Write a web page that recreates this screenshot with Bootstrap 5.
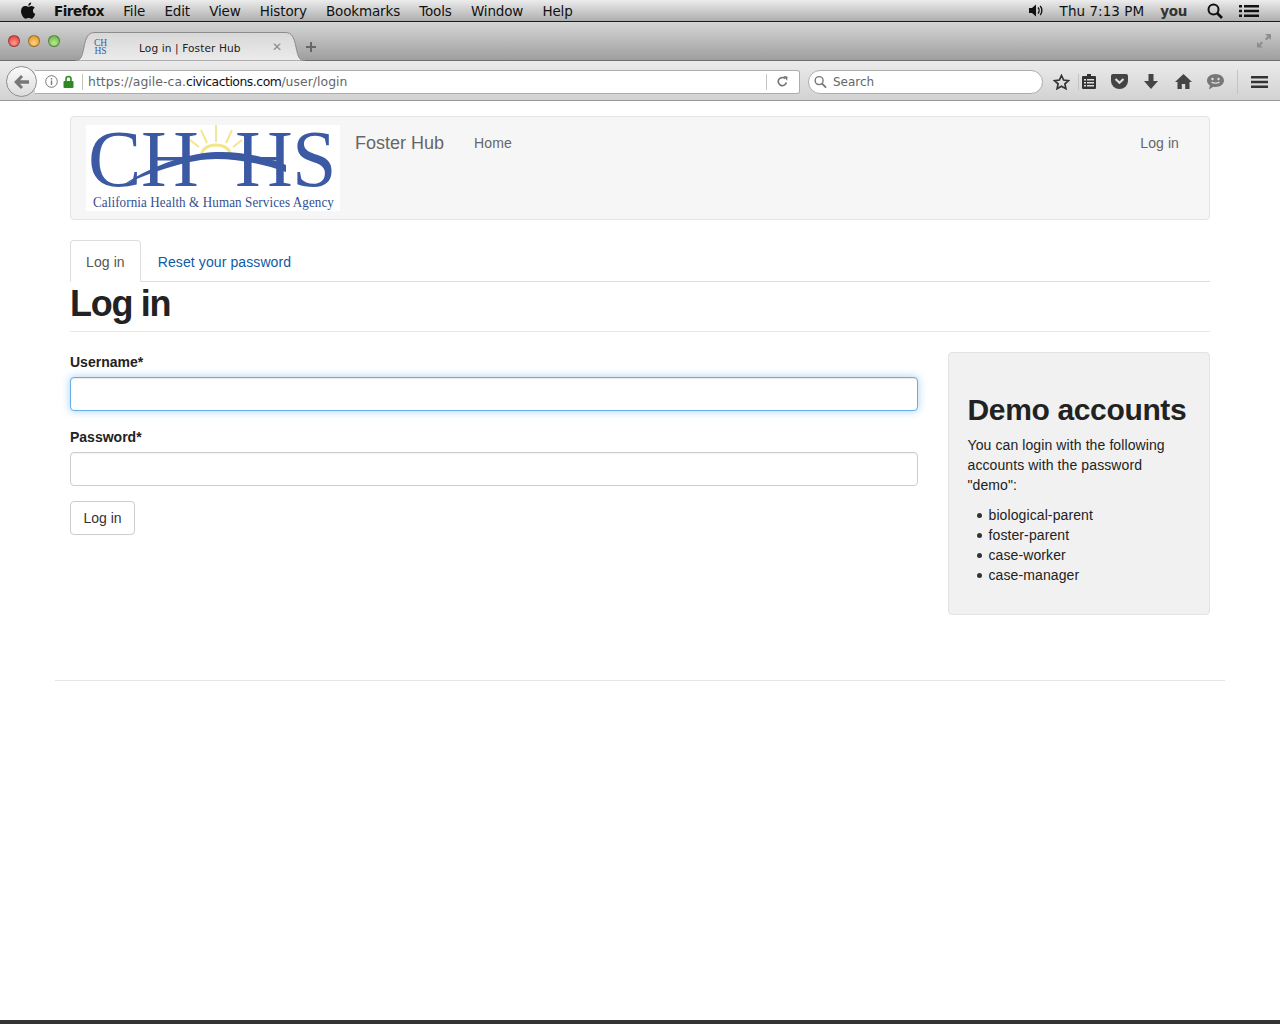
<!DOCTYPE html>
<html lang="en">
<head>
	<meta charset="UTF-8">
	<meta name="viewport" content="width=device-width, initial-scale=1.0">
	<title>Log in | Foster Hub</title>
	<link href="https://cdn.jsdelivr.net/npm/bootstrap@5.3.0/dist/css/bootstrap.min.css" rel="stylesheet">
	<style>
		html, body { height: 100%; }
		body { font-family: "Liberation Sans", Arial, sans-serif; font-size: 14px; line-height: 20px; letter-spacing: .1px; color: #222; background: #fff; overflow: hidden; }
		.screen { height: 1024px; }

		/* os + browser chrome */
		.menubar { height: 22px; font-family: "DejaVu Sans", sans-serif; font-size: 13.5px; letter-spacing: -.15px; color: #111; background: linear-gradient(#ececec, #aeaeae); border-bottom: 1px solid #1c1c1c; padding-left: 20px; padding-right: 21px; }
		.menubar span { white-space: nowrap; }
		.menu-items { margin-left: 18px; gap: 19.2px; }
		.menu-app { font-weight: 700; letter-spacing: -.5px; }
		.menu-right { margin-left: auto; }
		.menu-clock { letter-spacing: .05px; }
		.menu-user { font-weight: 700; color: #333; letter-spacing: -.3px; }
		.menu-search { margin-left: 20px; }
		.tabstrip { height: 39px; background: linear-gradient(#d6d6d6, #9e9e9e); border-bottom: 1px solid #6f6f6f; padding-left: 8px; padding-right: 8px; }
		.traffic { width: 12px; height: 12px; border-radius: 50%; margin-right: 8px; border: 1px solid rgba(0,0,0,.35); }
		.traffic-r { background: radial-gradient(circle at 50% 70%, #ff9a92, #d8322c); }
		.traffic-y { background: radial-gradient(circle at 50% 70%, #ffd47a, #d98a1c); }
		.traffic-g { background: radial-gradient(circle at 50% 70%, #b5ec8e, #5ea83a); }
		.tab-item { position: relative; width: 230px; height: 30px; margin-left: 7px; margin-top: 10px; align-self: flex-start; font-family: "DejaVu Sans", sans-serif; font-size: 10.6px; color: #222; flex-shrink: 0; }
		.tab-shape { position: absolute; left: 0; top: 0; }
		.tab-icon { position: relative; margin-left: 18px; width: 15px; font-family: "Liberation Serif", serif; font-size: 9.5px; line-height: 8px; letter-spacing: 0; color: #3b5ba5; text-align: center; }
		.tab-title { position: relative; margin-left: 31px; margin-top: 1px; }
		.tab-close { position: absolute; left: 197px; top: 5px; color: #8c8c8c; font-size: 12px; font-weight: bold; }
		.tab-plus { margin-top: 12px; }
		.toolbar { height: 40px; padding-top: 2px; background: linear-gradient(#ebebeb, #d2d2d2); border-bottom: 1px solid #9a9a9a; padding-left: 6px; font-family: "DejaVu Sans", sans-serif; font-size: 12px; letter-spacing: 0; }
		.back-btn { width: 31px; height: 31px; border-radius: 50%; background: linear-gradient(#fafafa, #dcdcdc); border: 1px solid #8f8f8f; flex: none; z-index: 1; }
		.url-bar { width: 765px; height: 24px; margin-left: -2px; background: #fff; border: 1px solid #adadad; border-left: 0; border-radius: 0 3px 3px 0; padding-left: 10px; color: #666; flex: none; }
		.url-sep { width: 1px; height: 16px; background: #c4c4c4; }
		.url-host { color: #111; letter-spacing: -.47px; }
		.url-text { margin-left: 5px; font-size: 12.4px; letter-spacing: .05px; }
		.lock-icon { margin-left: 5px; }
		.reload { margin-left: auto; margin-right: 10px; }
		.reload-icon { margin-right: 11px; }
		.search-bar { width: 235px; height: 24px; margin-left: 8px; background: #fff; border: 1px solid #adadad; border-radius: 12px; padding-left: 5px; color: #666; flex: none; }
		.search-label { margin-left: 6px; }
		.tool-icons { margin-left: 10px; }
		.tool-clip { margin-left: 3px; }
		.tool-pocket { margin-left: 15px; }
		.tool-down { margin-left: 16px; }
		.tool-home { margin-left: 17px; }
		.tool-chat { margin-left: 15px; }
		.tool-sep { margin-left: 13px; height: 24px; }
		.tool-menu { margin-left: 13px; }

		/* page */
		.page-wrap { width: 1170px; margin: 0 auto; padding: 15px 15px 0; flex: 1 1 auto; }
		.site-nav { height: 104px; padding: 8px 15px; background: #f6f6f6; border: 1px solid #e4e4e4; border-radius: 4px; color: #666; margin-bottom: 20px; }
		.logo-box { width: 254px; height: 86px; background: #fff; flex: none; }
		.site-name { margin-left: 15px; font-size: 18px; padding-top: 8px; letter-spacing: 0; }
		.site-link { margin-left: 30px; padding-top: 8px; color: #666; text-decoration: none; }
		.site-login { margin-left: auto; padding-top: 8px; padding-right: 15px; color: #666; text-decoration: none; }
		.page-tabs { border-bottom: 1px solid #ddd; height: 42px; }
		.page-tabs .nav-link { height: 42px; padding: 11px 15px; color: #0f5aa6; border: 1px solid transparent; border-radius: 4px 4px 0 0; margin-right: 1px; }
		.page-tabs .nav-link.active { color: #555; background: #fff; border-color: #ddd #ddd #fff; }
		.page-title { font-size: 36px; line-height: 40px; font-weight: 700; letter-spacing: -1.3px; color: #222; margin: 2px 0 0; padding-bottom: 7px; border-bottom: 1px solid #e8e8e8; }
		.foster-row { --bs-gutter-x: 30px; margin-top: 20px; }
		.field-label { font-weight: 700; margin-bottom: 5px; display: block; margin-top: 0; letter-spacing: 0; }
		.field-input { height: 34px; border-radius: 4px; border-color: #ccc; font-size: 14px; box-shadow: inset 0 1px 1px rgba(0,0,0,.05); }
		.field-input.is-focused { border-color: #66afe9; box-shadow: inset 0 1px 1px rgba(0,0,0,.08), 0 0 8px rgba(102,175,233,.6); }
		.field-group { margin-bottom: 16px; }
		.field-group + .field-group { margin-bottom: 15px; }
		.login-btn { height: 34px; padding: 6px 12.5px; font-size: 14px; line-height: 20px; color: #333; background: #fff; border: 1px solid #ccc; border-radius: 4px; }
		.demo-well { height: 263px; padding: 19px; background: #f1f1f1; border: 1px solid #e3e3e3; border-radius: 4px; }
		.demo-well h2 { font-size: 30px; line-height: 33px; font-weight: 700; letter-spacing: -.35px; color: #222; margin: 21px 0 9px; }
		.demo-well p { margin-bottom: 10px; }
		.demo-well ul { padding-left: 21px; margin: 0; list-style: none; }
		.demo-well li { position: relative; }
		.demo-well li::before { content: ""; position: absolute; left: -12px; top: 8px; width: 5px; height: 5px; border-radius: 50%; background: #333; }
		.page-rule { width: 1170px; margin: 65px -15px 0; border: 0; border-top: 1px solid #e5e5e5; opacity: 1; }
		.dock-edge { height: 4px; background: #333; flex: none; }
	</style>
</head>
<body>
<div class="screen d-flex flex-column">

	<!-- mac menu bar -->
	<div class="menubar d-flex align-items-center flex-shrink-0">
		<svg width="16" height="18" viewBox="0 0 16 18"><path fill="#111" d="M11.2 0.5c.1 1.5-1.2 3.200-2.900 3.200-.2-1.500 1.300-3.100 2.900-3.200zM8.200 4.700c.9 0 1.800-.8 3.300-.8 1.300 0 2.500.7 3.200 1.800-2.600 1.500-2.200 5.200.6 6.300-.5 1.300-2 4.800-3.900 4.800-1.100 0-1.500-.7-2.800-.7s-1.800.7-2.800.7C3.700 16.800 1 12.700 1 9.300c0-3.400 2.100-5.300 4.200-5.300 1.300 0 2.200.7 3 .7z"/></svg>
		<div class="d-flex menu-items">
			<span class="menu-app">Firefox</span><span>File</span><span>Edit</span><span>View</span><span>History</span><span>Bookmarks</span><span>Tools</span><span>Window</span><span>Help</span>
		</div>
		<div class="d-flex align-items-center menu-right">
			<svg width="15" height="13" viewBox="0 0 15 13"><path fill="#111" d="M0 4h3l4-3.500v12L3 9H0z"/><path fill="none" stroke="#111" stroke-width="1.400" d="M9 3.500c1.400 1.600 1.400 4.400 0 6M11.200 2c2.200 2.400 2.200 6.600 0 9"/></svg>
			<span class="menu-clock ms-3">Thu 7:13 PM</span>
			<span class="menu-user ms-3">you</span>
			<svg class="menu-search" width="16" height="16" viewBox="0 0 16 16"><circle cx="6.500" cy="6.500" r="5" fill="none" stroke="#111" stroke-width="2"/><path stroke="#111" stroke-width="2.600" d="M10 10l5 5"/></svg>
			<svg class="ms-3" width="20" height="14" viewBox="0 0 20 14"><path fill="#111" d="M0 1h3v2.500H0zM5 1h15v2.500H5zM0 5.700h3v2.500H0zM5 5.700h15v2.500H5zM0 10.500h3V13H0zM5 10.500h15V13H5z"/></svg>
		</div>
	</div>

	<!-- tab strip -->
	<div class="tabstrip d-flex align-items-center flex-shrink-0">
		<span class="traffic traffic-r"></span><span class="traffic traffic-y"></span><span class="traffic traffic-g"></span>
		<div class="tab-item d-flex align-items-center">
			<svg class="tab-shape" width="230" height="30" viewBox="0 0 230 30"><defs><linearGradient id="tabFill" x1="0" y1="0" x2="0" y2="1"><stop offset="0" stop-color="#d8d8d8"/><stop offset="1" stop-color="#ebebeb"/></linearGradient></defs><path fill="url(#tabFill)" stroke="#8c8c8c" d="M0 28.500C6 28.500 7 25 9 15 11 5 13 .5 20 .5H210C217 .5 219 5 221 15 223 25 224 28.500 230 28.500"/></svg>
			<div class="tab-icon">CH<br>HS</div>
			<span class="tab-title">Log in | Foster Hub</span>
			<span class="tab-close">✕</span>
		</div>
		<svg class="tab-plus" width="12" height="12" viewBox="0 0 12 12"><path fill="#666" d="M5 1h2v4h4v2H7v4H5V7H1V5h4z"/></svg>
		<svg class="ms-auto" width="16" height="16" viewBox="0 0 16 16"><path fill="#8d8d8d" d="M9 1h6v6l-2-2-2.500 2.500-1.500-1.500L11.500 3zM1 9l2 2 2.500-2.500L7 10l-2.500 2.500 2 2H1z"/></svg>
	</div>

	<!-- nav toolbar -->
	<div class="toolbar d-flex align-items-center flex-shrink-0">
		<div class="back-btn d-flex align-items-center justify-content-center">
			<svg width="16" height="14" viewBox="0 0 16 14"><path fill="#777" d="M7 0l2 2-3 3.300h9v3.400H6l3 3.300-2 2-7-7z"/></svg>
		</div>
		<div class="url-bar d-flex align-items-center">
			<svg width="13" height="13" viewBox="0 0 13 13"><circle cx="6.500" cy="6.500" r="5.800" fill="none" stroke="#777"/><path fill="#777" d="M5.800 5.500h1.400V10H5.800zM5.800 3h1.400v1.400H5.800z"/></svg>
			<svg class="lock-icon" width="11" height="13" viewBox="0 0 11 13"><path fill="none" stroke="#2f8a24" stroke-width="1.600" d="M3 6V4a2.500 2.500 0 0 1 5 0v2"/><rect x=".5" y="6" width="10" height="7" rx="1" fill="#2f8a24"/></svg>
			<span class="url-sep ms-2"></span>
			<span class="url-text">https://agile-ca.<span class="url-host">civicactions.com</span>/user/login</span>
			<span class="url-sep reload"></span>
			<svg class="reload-icon" width="11" height="11" viewBox="0 0 13 13"><path fill="none" stroke="#777" stroke-width="2" d="M11 7.500A4.800 4.800 0 1 1 9.500 3"/><path fill="#777" d="M7.500 0l5 .5-.5 5z"/></svg>
		</div>
		<div class="search-bar d-flex align-items-center">
			<svg width="13" height="14" viewBox="0 0 14 14"><circle cx="5.500" cy="5.500" r="4.300" fill="none" stroke="#777" stroke-width="1.500"/><path stroke="#777" stroke-width="2" d="M8.500 8.500l4.500 4.500"/></svg>
			<span class="search-label">Search</span>
		</div>
		<div class="tool-icons d-flex align-items-center">
			<svg width="17" height="16" viewBox="0 0 17 16"><path fill="none" stroke="#333" stroke-width="1.700" d="M8.500 1.500l2.100 4.500 4.900.6-3.600 3.300 1 4.800-4.400-2.400-4.400 2.400 1-4.800L1.500 6.600l4.900-.6z"/></svg>
			<span class="url-sep ms-2"></span>
			<svg class="tool-clip" width="14" height="15" viewBox="0 0 14 15"><path fill="#333" d="M5 0h4v2h4a1 1 0 0 1 1 1v11a1 1 0 0 1-1 1H1a1 1 0 0 1-1-1V3a1 1 0 0 1 1-1h4z"/><path fill="#ddd" d="M2 5h2v1.500H2zM5 5h7v1.500H5zM2 8h2v1.500H2zM5 8h7v1.500H5zM2 11h2v1.500H2zM5 11h7v1.500H5z"/></svg>
			<svg class="tool-pocket" width="17" height="15" viewBox="0 0 17 15"><path fill="#444" d="M2 0h13a2 2 0 0 1 2 2v5a8.500 8 0 0 1-17 0V2a2 2 0 0 1 2-2z"/><path fill="none" stroke="#ddd" stroke-width="2.200" d="M4.500 5l4 3.800 4-3.800"/></svg>
			<svg class="tool-down" width="14" height="15" viewBox="0 0 14 15"><path fill="#444" d="M4.500 0h5v7H14l-7 8-7-8h4.500z"/></svg>
			<svg class="tool-home" width="17" height="15" viewBox="0 0 17 15"><path fill="#444" d="M8.500 0L17 8h-2.500v7H10.200v-5H6.800v5H2.500V8H0z"/></svg>
			<svg class="tool-chat" width="17" height="16" viewBox="0 0 17 16"><path fill="#777" d="M8.500 0C13 0 17 2.800 17 6.500S13 13 8.500 13c-.8 0-1.500-.1-2.200-.2L2 15.500l.9-4C1.100 10.300 0 8.500 0 6.500 0 2.800 4 0 8.500 0z"/><circle cx="5.500" cy="5" r="1.200" fill="#ddd"/><circle cx="11.500" cy="5" r="1.200" fill="#ddd"/><path fill="none" stroke="#ddd" stroke-width="1.300" d="M4.500 8c2 1.600 6 1.600 8 0"/></svg>
			<span class="url-sep tool-sep"></span>
			<svg class="tool-menu" width="17" height="14" viewBox="0 0 17 14"><path fill="#333" d="M0 1h17v2.600H0zM0 5.700h17v2.600H0zM0 10.400h17V13H0z"/></svg>
		</div>
	</div>

	<!-- page -->
	<div class="page-wrap">
		<nav class="site-nav d-flex align-items-start">
			<div class="logo-box">
				<svg width="254" height="86" viewBox="0 0 254 86" overflow="visible">
					<g stroke="#f2e58a" stroke-width="1.800" fill="none">
						<path d="M130 0v17M115 5l6 13M146 5l-6 13M104 15l9 7M156 15l-9 7"/>
						<path stroke-width="3" d="M116 29a14 9 0 0 1 28 0"/>
					</g>
					<g font-family="Liberation Serif, serif" fill="#3c5aa4">
						<text x="2 55 149 206" y="61" font-size="80">CHHS</text>
						<text x="7" y="82" font-size="14.400" textLength="241" lengthAdjust="spacingAndGlyphs" fill="#34508f">California Health &amp; Human Services Agency</text>
					</g>
					<path fill="#3c5aa4" d="M37 60C70 38 105 28 130 27 155 26 180 32 200 40L200 47C180 40 155 34 130 34 105 34 70 45 37 60z"/>
				</svg>
			</div>
			<span class="site-name">Foster Hub</span>
			<a class="site-link" href="#">Home</a>
			<a class="site-login" href="#">Log in</a>
		</nav>

		<ul class="nav page-tabs">
			<li class="nav-item"><a class="nav-link active" href="#">Log in</a></li>
			<li class="nav-item"><a class="nav-link" href="#">Reset your password</a></li>
		</ul>
		<h1 class="page-title">Log in</h1>

		<div class="row foster-row">
			<div class="col-9">
				<form onsubmit="event.preventDefault();">
					<div class="field-group">
						<label class="field-label" for="username">Username*</label>
						<input type="text" class="form-control field-input is-focused" id="username">
					</div>
					<div class="field-group">
						<label class="field-label" for="password">Password*</label>
						<input type="password" class="form-control field-input" id="password">
					</div>
					<button type="submit" class="btn login-btn">Log in</button>
				</form>
			</div>
			<div class="col-3">
				<div class="demo-well">
					<h2>Demo accounts</h2>
					<p>You can login with the following accounts with the password "demo":</p>
					<ul>
						<li>biological-parent</li>
						<li>foster-parent</li>
						<li>case-worker</li>
						<li>case-manager</li>
					</ul>
				</div>
			</div>
		</div>
		<hr class="page-rule">
	</div>

	<div class="dock-edge"></div>
</div>
<script src="https://cdn.jsdelivr.net/npm/bootstrap@5.3.0/dist/js/bootstrap.bundle.min.js"></script>
</body>
</html>
